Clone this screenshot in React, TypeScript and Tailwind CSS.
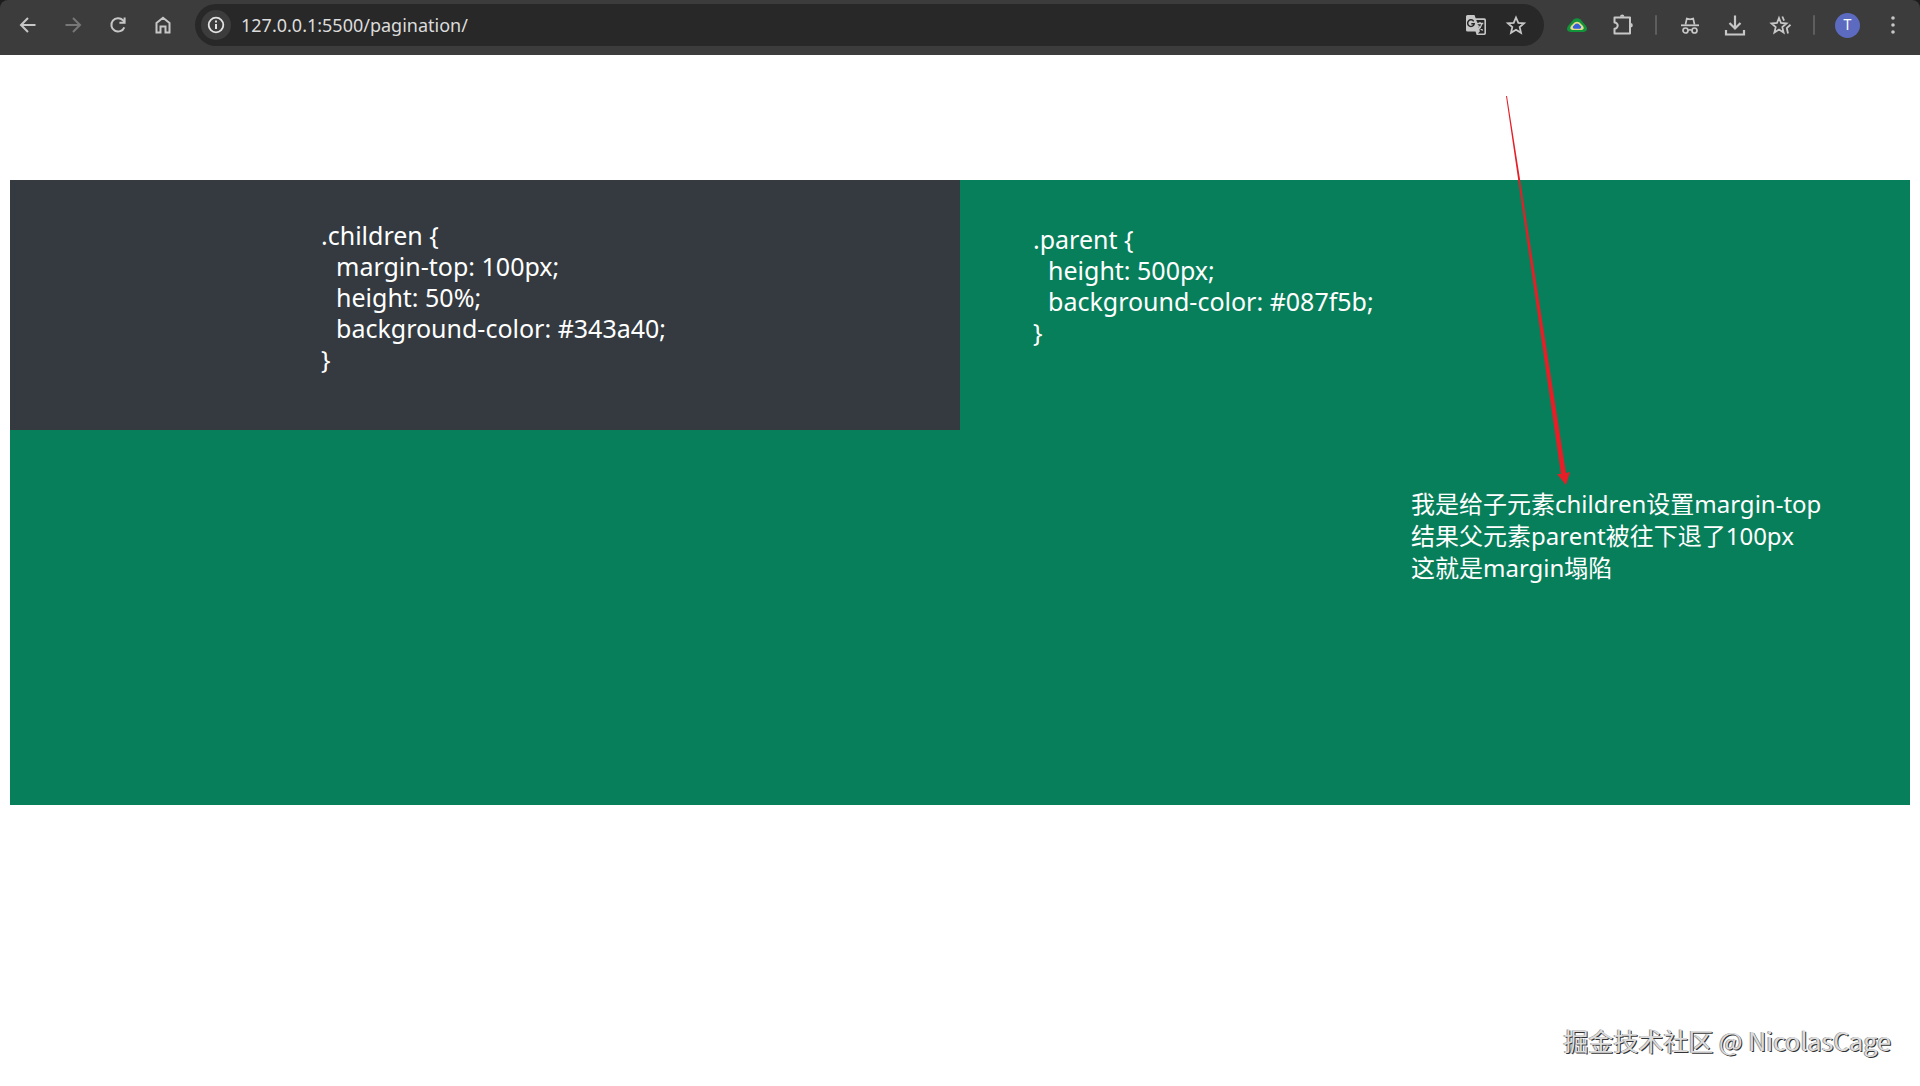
import type { ReactNode } from "react";

const stroke = {
  fill: "none",
  stroke: "currentColor",
  strokeWidth: 2,
} as const;

function Icon({ children }: { children: ReactNode }) {
  return (
    <svg viewBox="0 0 24 24" className="size-6" aria-hidden="true">
      {children}
    </svg>
  );
}

function ToolButton({ label, dim = false, children }: { label: string; dim?: boolean; children: ReactNode }) {
  return (
    <button
      type="button"
      aria-label={label}
      disabled={dim}
      className={`flex h-10 w-[45px] shrink-0 items-center justify-center ${dim ? "text-[#777777]" : "text-[#c7c7c7]"}`}
    >
      {children}
    </button>
  );
}

function Divider() {
  return (
    <div className="flex w-[23px] shrink-0 justify-center">
      <div className="h-5 w-0.5 rounded-full bg-[#5e5e5e]" />
    </div>
  );
}

function AddressBar() {
  return (
    <div className="mx-2.5 flex h-[42px] min-w-0 flex-1 items-center rounded-full bg-[#282828] pr-2 pl-1.5">
      <button
        type="button"
        aria-label="View site information"
        className="flex size-[30px] shrink-0 items-center justify-center rounded-full bg-[#3c3c3c] text-[#e3e3e3]"
      >
        <Icon>
          <circle cx="12" cy="12" r="7.3" {...stroke} strokeWidth={1.8} />
          <path d="M12 11v5M12 7.6v2" {...stroke} />
        </Icon>
      </button>
      <input
        type="text"
        aria-label="Address"
        defaultValue="127.0.0.1:5500/pagination/"
        className="h-full min-w-0 flex-1 bg-transparent px-2.5 font-['Noto_Sans',sans-serif] text-lg text-[#dcdcdc] outline-none"
      />
      <button type="button" aria-label="Translate this page" className="flex h-10 w-10 shrink-0 items-center justify-center text-[#c7c7c7]">
        <Icon>
          <path d="M3.5 2h7l1.2 3.3h8.600q1.700 0 1.700 1.700v13.300q0 1.700-1.700 1.700h-7.600l-1.200-3.500H3.500Q2 18.500 2 17V3.500Q2 2 3.500 2Z" fill="currentColor" />
          <path d="M12.300 7h7.600q.5 0 .5.5v12.300q0 .6-.5.6h-6l2-2.200z" fill="#282828" />
          <path d="M9.700 8.300A3.300 3.300 0 1 0 10.200 10.800H7.300" fill="none" stroke="#282828" strokeWidth="1.500" />
          <path d="M13 10.500h6.300M16 9v1.500M18 10.700q-1 4-4.200 6.200M14.300 12.500q1.500 3 4.400 4.900" {...stroke} strokeWidth={1.3} />
        </Icon>
      </button>
      <button type="button" aria-label="Bookmark this tab" className="flex h-10 w-10 shrink-0 items-center justify-center text-[#c7c7c7]">
        <Icon>
          <path d="M12 4.500l2.300 5.300 5.800.5-4.400 3.800 1.300 5.700-5-3-5 3 1.300-5.700-4.400-3.800 5.800-.5z" {...stroke} strokeWidth={1.8} />
        </Icon>
      </button>
    </div>
  );
}

function BrowserToolbar() {
  return (
    <div className="bg-[#1c1c1c]">
      <header className="flex h-[55px] items-center rounded-t-lg bg-[#3c3c3c] px-[5px] pb-[5px]">
        <ToolButton label="Back">
          <Icon>
            <path d="M19.500 12H5.500M12 5l-7 7 7 7" {...stroke} />
          </Icon>
        </ToolButton>
        <ToolButton label="Forward" dim>
          <Icon>
            <path d="M4.500 12h14M12 5l7 7-7 7" {...stroke} />
          </Icon>
        </ToolButton>
        <ToolButton label="Reload">
          <Icon>
            <path d="M18.300 14.300A6.700 6.700 0 1 1 17 7.300L18.500 9" {...stroke} />
            <path d="M18.600 4.500v5.200h-5.200" {...stroke} />
          </Icon>
        </ToolButton>
        <ToolButton label="Home">
          <Icon>
            <path d="M5.500 10L12 4.800 18.500 10v9.500h-4v-6h-5v6h-4z" {...stroke} />
          </Icon>
        </ToolButton>

        <AddressBar />

        <ToolButton label="Drive extension">
          <Icon>
            <path d="M8.500 6.500q3.500-2.500 7 0l5.500 6.500q3 5-2.500 6h-13q-5.500-1-2.500-6z" fill="#11943a" />
            <path d="M9.500 9.500q2.500-1.500 5 0l3.500 3.500q2 3.300-1.500 4h-9q-3.500-.7-1.500-4z" fill="#e4dc8a" />
            <path d="M10.300 11q1.700-.9 3.400 0l2.300 2.500q.8 2-1.200 2.300H9.200Q7.200 15.500 8 13.500z" fill="#3560d8" />
          </Icon>
        </ToolButton>
        <ToolButton label="Extensions">
          <Icon>
            <path d="M4.500 4.500H20V20.500H4.500v-4.700a3.200 3.200 0 0 0 0-6.400z" {...stroke} strokeLinejoin="round" />
            <path d="M10 3.800a2.200 2.200 0 0 1 4.400 0zM20.500 10a2.300 2.300 0 0 1 0 4.600z" fill="currentColor" />
          </Icon>
        </ToolButton>
        <Divider />
        <ToolButton label="Incognito">
          <Icon>
            <path d="M3 12.300h18" {...stroke} strokeWidth={1.800} />
            <path d="M7.500 11.500l1.300-6 3.200.8 3.200-.8 1.300 6" {...stroke} strokeWidth={1.700} />
            <circle cx="7.500" cy="17.500" r="2.500" {...stroke} strokeWidth={1.700} />
            <circle cx="16.500" cy="17.500" r="2.500" {...stroke} strokeWidth={1.700} />
            <path d="M10 17.300q2-1 4 0" {...stroke} strokeWidth={1.500} />
          </Icon>
        </ToolButton>
        <ToolButton label="Downloads">
          <Icon>
            <path d="M12 2.500v12.500M6.500 10l5.500 5.500 5.500-5.500M3 17v4.500h18V17" {...stroke} strokeWidth={2.200} />
          </Icon>
        </ToolButton>
        <ToolButton label="Bookmarks">
          <Icon>
            <path d="M11 5l2 5 5.500.5-4.200 3.600 1.300 5.400-4.600-2.900-4.600 2.900 1.300-5.400-4.200-3.600L9 10z" {...stroke} strokeWidth={1.800} />
            <path d="M14.300 3.500l1.800 4.200M22.500 11.800l-3.700 3.200 1.200 5.500" {...stroke} strokeWidth={1.800} />
          </Icon>
        </ToolButton>
        <Divider />
        <button type="button" aria-label="Profile" className="flex h-10 w-[45px] shrink-0 items-center justify-center">
          <span className="flex size-[25px] items-center justify-center rounded-full bg-[#5c6bc0] font-['Roboto',sans-serif] text-sm text-white">T</span>
        </button>
        <ToolButton label="Menu">
          <Icon>
            <path d="M12 3.200a1.800 1.800 0 1 1 0 3.600 1.800 1.800 0 0 1 0-3.600zM12 10.200a1.800 1.800 0 1 1 0 3.600 1.800 1.800 0 0 1 0-3.600zM12 17.200a1.800 1.800 0 1 1 0 3.600 1.800 1.800 0 0 1 0-3.600z" fill="currentColor" />
          </Icon>
        </ToolButton>
      </header>
    </div>
  );
}

function CodeBlock({ selector, rules }: { selector: string; rules: string[] }) {
  const text = [`${selector} {`, ...rules.map((rule) => `\t${rule}`), "}"].join("\n");
  return (
    <pre className="font-['Noto_Sans',sans-serif] text-[25px] leading-[31px] text-white [tab-size:15px]">{text}</pre>
  );
}

function Annotation() {
  return (
    <div className="relative ml-[451px] w-fit">
      <svg viewBox="0 0 70 390" className="absolute bottom-full left-[89px] mb-0.5 h-[390px] w-[70px]" aria-hidden="true">
        <path d="M6 0L7 0L66 377L70 376L66 389L57 378L61 378Z" fill="#e61e28" />
      </svg>
      <p className="font-['Noto_Sans','Noto_Sans_CJK_SC',sans-serif] text-2xl leading-8 whitespace-nowrap text-white">
        我是给子元素children设置margin-top
        <br />
        结果父元素parent被往下退了100px
        <br />
        这就是margin塌陷
      </p>
    </div>
  );
}

export default function App() {
  return (
    <div className="flex min-h-screen flex-col bg-white">
      <BrowserToolbar />
      <main className="mx-2.5 mt-[125px] flex h-[625px] items-start bg-[#087f5b]">
        <section className="h-[250px] w-1/2 bg-[#343a40] pt-10 pl-[311px]">
          <CodeBlock selector=".children" rules={["margin-top: 100px;", "height: 50%;", "background-color: #343a40;"]} />
        </section>
        <section className="w-1/2 pt-11">
          <div className="pl-[73px]">
            <CodeBlock selector=".parent" rules={["height: 500px;", "background-color: #087f5b;"]} />
          </div>
          <div className="pt-[140px]">
            <Annotation />
          </div>
        </section>
      </main>
      <footer className="mt-auto flex justify-end pr-[29px] pb-7 font-['Noto_Sans_CJK_SC',sans-serif] text-[25px] leading-9 text-[#dcdcdc] [text-shadow:1px_1px_0_#333,-1px_0_0_#999]">
        掘金技术社区 @ NicolasCage
      </footer>
    </div>
  );
}
